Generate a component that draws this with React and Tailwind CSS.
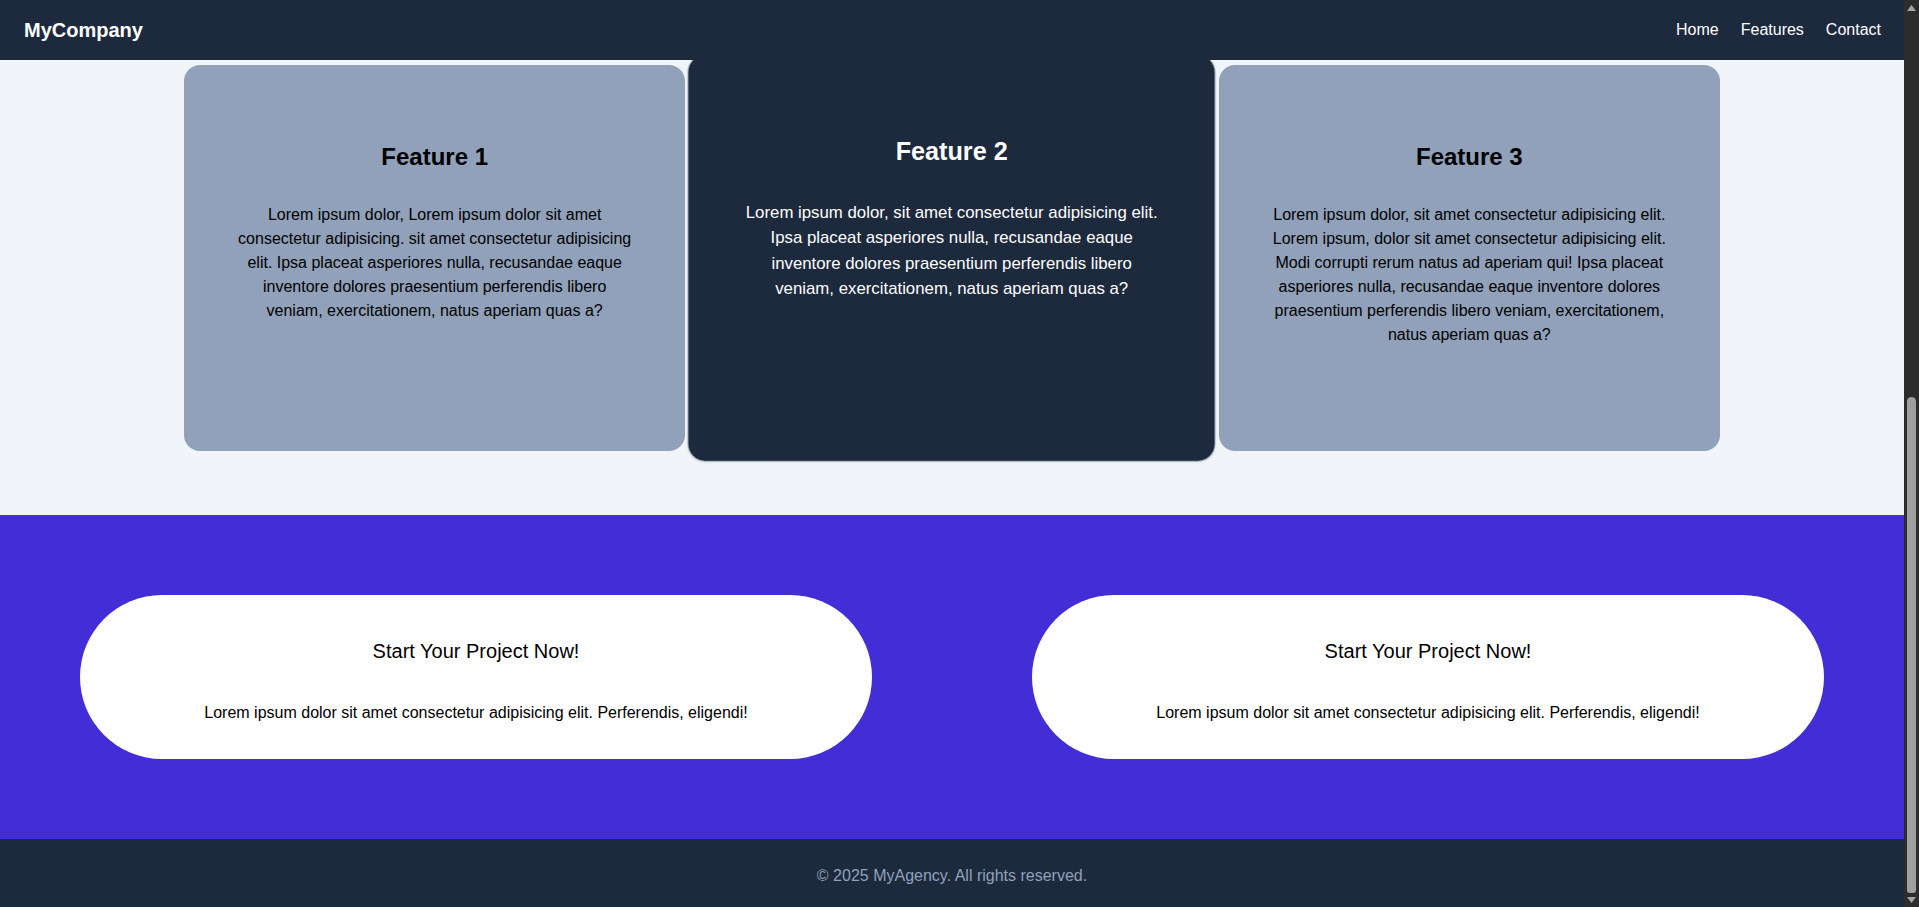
const features = [
  {
    title: 'Feature 1',
    text: 'Lorem ipsum dolor, Lorem ipsum dolor sit amet consectetur adipisicing. sit amet consectetur adipisicing elit. Ipsa placeat asperiores nulla, recusandae eaque inventore dolores praesentium perferendis libero veniam, exercitationem, natus aperiam quas a?',
  },
  {
    title: 'Feature 2',
    text: 'Lorem ipsum dolor, sit amet consectetur adipisicing elit. Ipsa placeat asperiores nulla, recusandae eaque inventore dolores praesentium perferendis libero veniam, exercitationem, natus aperiam quas a?',
    active: true,
  },
  {
    title: 'Feature 3',
    text: 'Lorem ipsum dolor, sit amet consectetur adipisicing elit. Lorem ipsum, dolor sit amet consectetur adipisicing elit. Modi corrupti rerum natus ad aperiam qui! Ipsa placeat asperiores nulla, recusandae eaque inventore dolores praesentium perferendis libero veniam, exercitationem, natus aperiam quas a?',
  },
];

function FeatureCard({ feature }) {
  const base = 'h-[386px] rounded-2xl px-[52px] pt-[76px] text-center transition-transform duration-200';
  const look = feature.active
    ? 'relative bg-slate-800 text-white scale-105 shadow-sm ring-1 ring-slate-500/50'
    : 'bg-slate-400 text-black';

  return (
    <div className={`${base} ${look}`}>
      <h3 className="text-2xl leading-8 font-bold">{feature.title}</h3>
      <p className="mt-[30px] text-base leading-6">{feature.text}</p>
    </div>
  );
}

function ProjectCard() {
  return (
    <div className="bg-white rounded-full pt-[42px] pb-[34px] text-center text-black">
      <h4 className="text-xl leading-7">Start Your Project Now!</h4>
      <p className="mt-9 text-base leading-6">
        Lorem ipsum dolor sit amet consectetur adipisicing elit. Perferendis, eligendi!
      </p>
    </div>
  );
}

function Scrollbar() {
  return (
    <div className="w-[15px] h-full bg-[#2c2c2c] flex flex-col">
      <div className="h-[15px] flex items-center justify-center">
        <svg width="9" height="6" viewBox="0 0 9 6">
          <path d="M4.5 0 L9 6 L0 6 Z" fill="#a3a3a3" />
        </svg>
      </div>
      <div className="flex-1 flex flex-col justify-end pl-[3px] pr-[3px]">
        <div className="h-[496px] w-[9px] rounded-t-[5px] rounded-b-[3px] bg-[#9f9f9f]" />
      </div>
      <div className="h-[14px] flex items-center justify-center">
        <svg width="9" height="6" viewBox="0 0 9 6">
          <path d="M0 0 L9 0 L4.5 6 Z" fill="#a3a3a3" />
        </svg>
      </div>
    </div>
  );
}

export default function App() {
  return (
    <div className="flex h-screen overflow-hidden font-['Liberation_Sans',Arial,sans-serif]">
      <div className="flex-1 min-w-0 flex flex-col">
        <nav className="relative z-10 h-[60px] bg-slate-800 pl-6 pr-[23px] flex items-center justify-between text-white">
          <span className="text-xl font-bold">MyCompany</span>
          <div className="flex gap-[22px] text-base">
            <a href="#">Home</a>
            <a href="#">Features</a>
            <a href="#">Contact</a>
          </div>
        </nav>

        <section className="bg-slate-100 pt-[5px] pb-16">
          <div className="container mx-auto grid grid-cols-3 gap-4">
            {features.map((f) => (
              <FeatureCard key={f.title} feature={f} />
            ))}
          </div>
        </section>

        <section className="bg-indigo-700 py-20 px-20 grid grid-cols-2 gap-40">
          <ProjectCard />
          <ProjectCard />
        </section>

        <footer className="bg-slate-800 pt-[25px] pb-[19px] text-center text-slate-400 text-base leading-6">
          © 2025 MyAgency. All rights reserved.
        </footer>
      </div>
      <Scrollbar />
    </div>
  );
}
